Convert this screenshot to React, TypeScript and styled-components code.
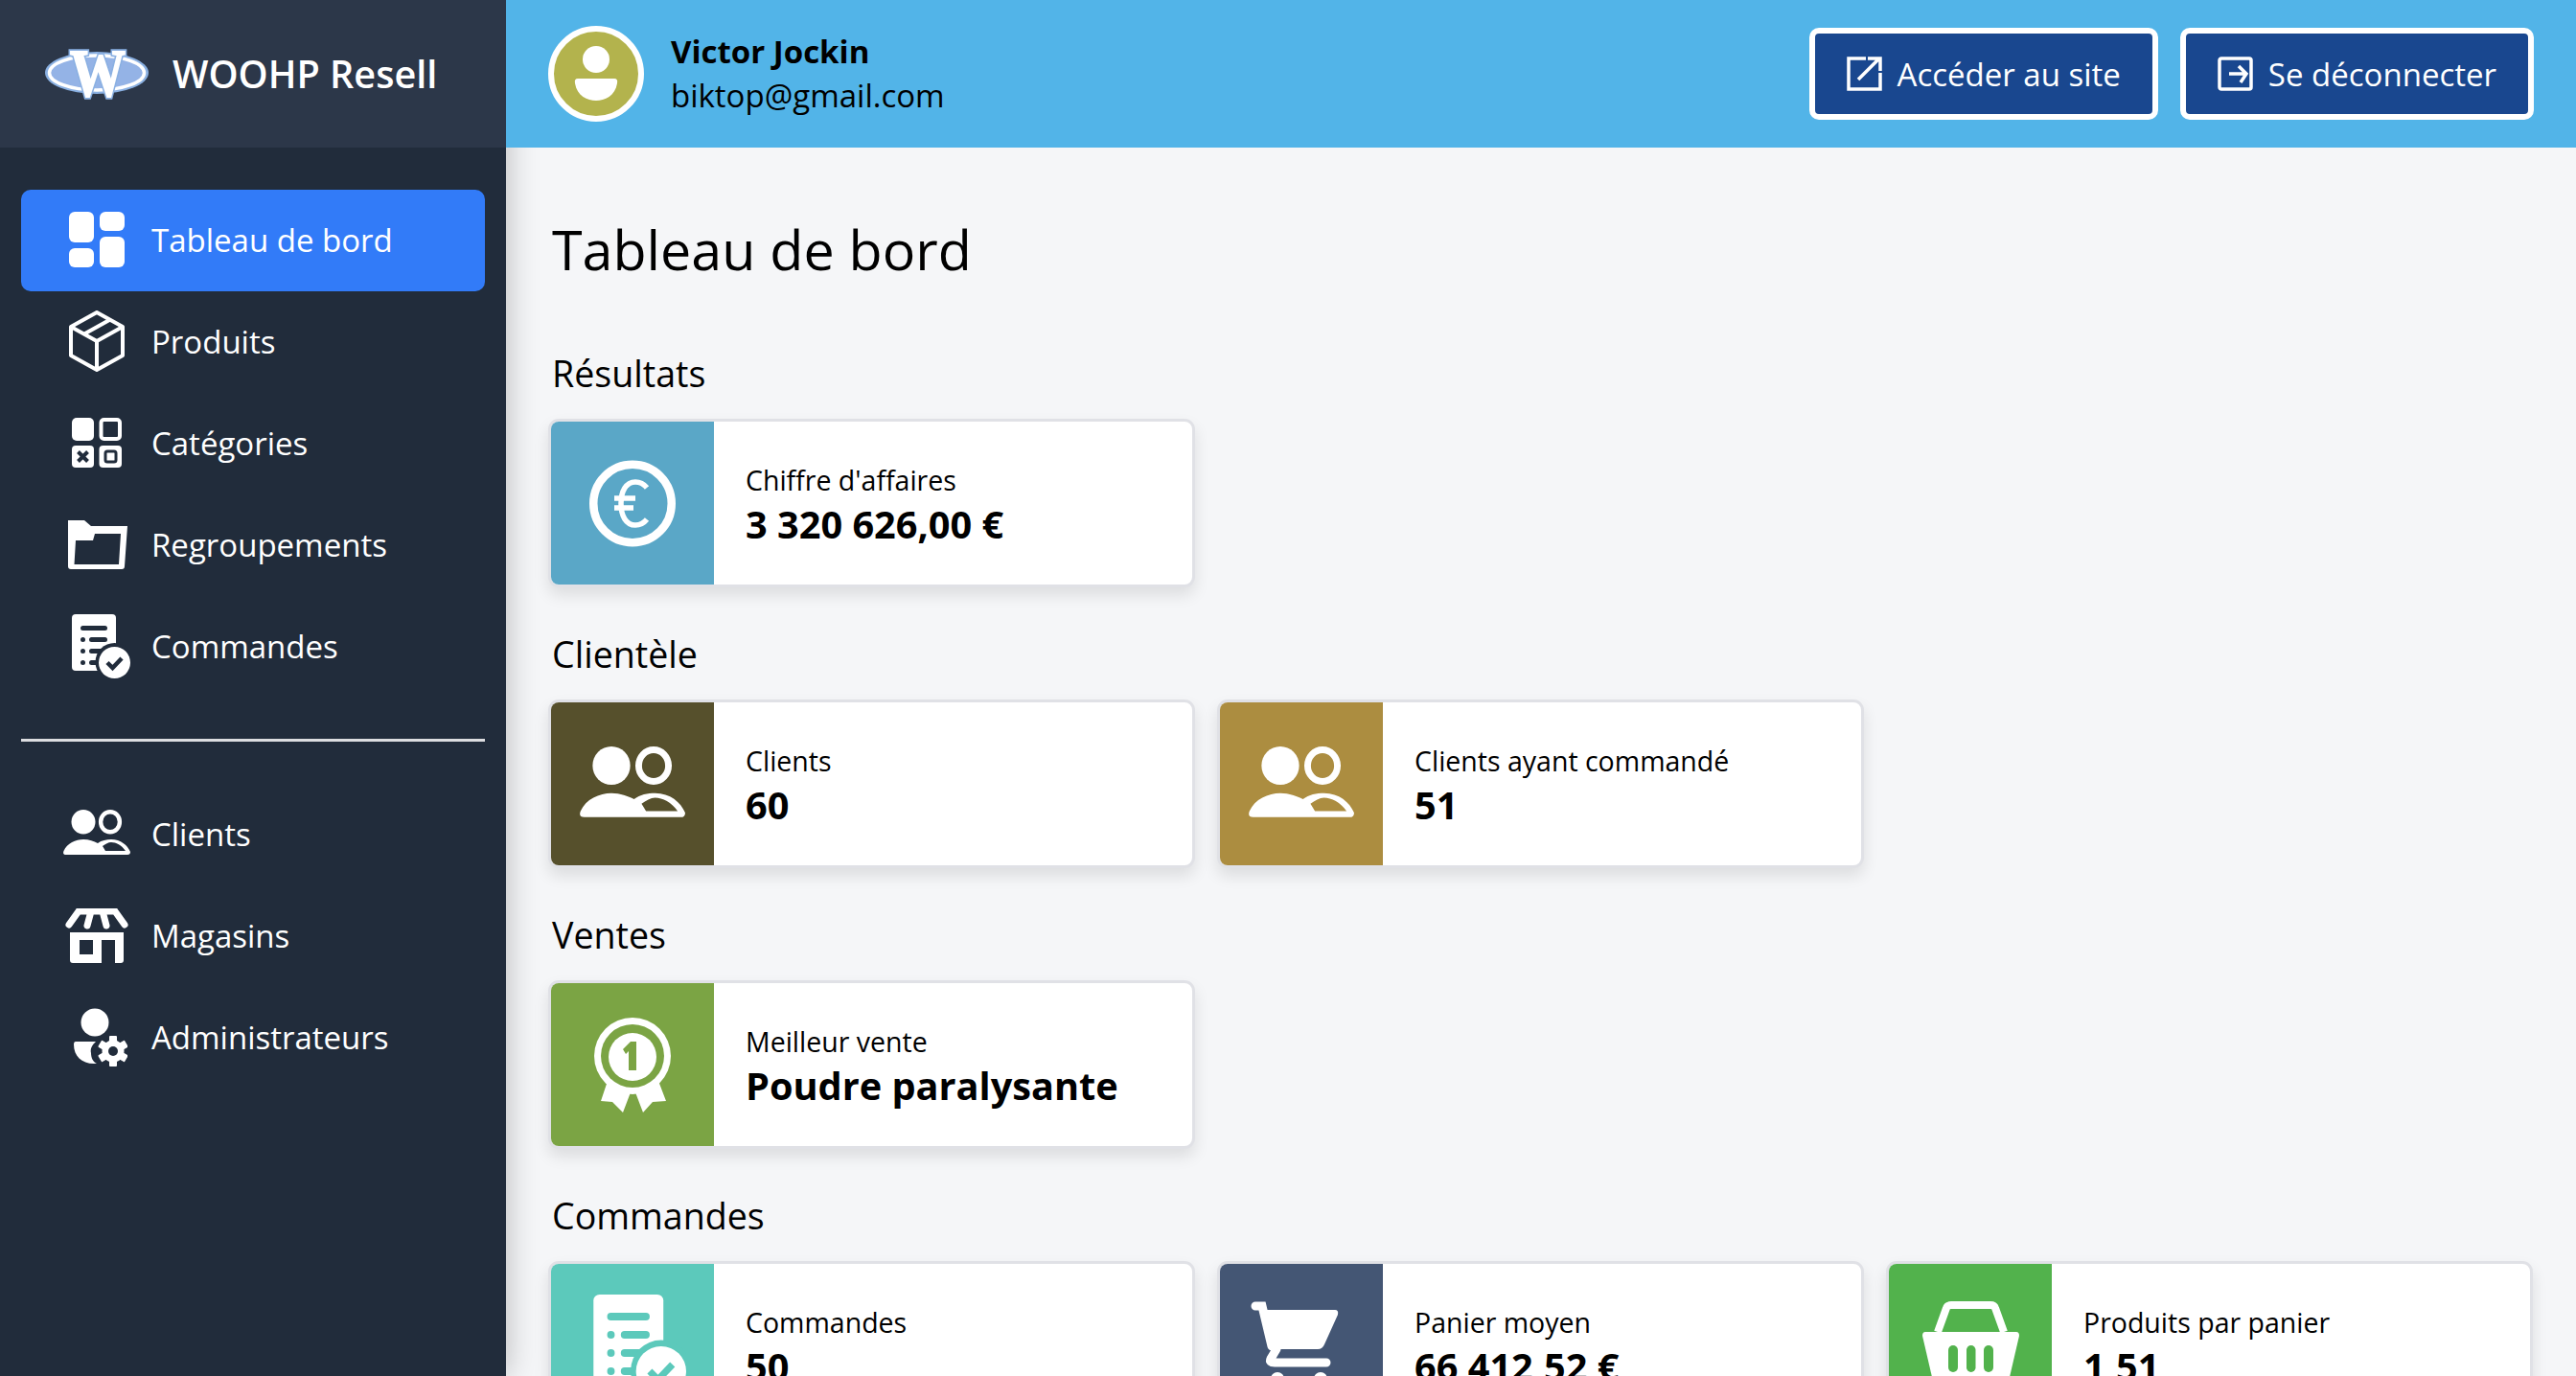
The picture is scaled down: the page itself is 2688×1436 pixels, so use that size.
import React from 'react'
import styled, { createGlobalStyle } from 'styled-components'

const GlobalStyle = createGlobalStyle`
  html, body {
    margin: 0;
    padding: 0;
    background: #f5f6f8;
    font-family: 'Open Sans', 'Liberation Sans', sans-serif;
  }
`

const Page = styled.div`
  display: flex;
  height: 100vh;
  overflow: hidden;
`

const Sidebar = styled.aside`
  width: 528px;
  flex: none;
  background: #212c3b;
  color: #fff;
  position: relative;
  z-index: 1;
  box-shadow: 0 0 32px rgba(0, 0, 0, 0.25);
`

const Brand = styled.div`
  height: 154px;
  display: flex;
  align-items: center;
  gap: 24px;
  padding-left: 46px;
  background: #2c3749;
`

const BrandName = styled.span`
  font-size: 39.6px;
  font-weight: 600;
`

const Nav = styled.nav`
  display: flex;
  flex-direction: column;
  padding: 44px 22px 0;
`

const NavItem = styled.a<{ $active?: boolean }>`
  height: 106px;
  box-sizing: border-box;
  display: flex;
  align-items: center;
  gap: 20px;
  padding: 0 0 2px 42px;
  border-radius: 10px;
  font-size: 33px;
  background: ${({ $active }) => ($active ? '#327bf8' : 'transparent')};
`

const NavIcon = styled.span`
  width: 74px;
  display: flex;
  justify-content: center;
`

const Divider = styled.hr`
  height: 3px;
  margin: 43px 0 44px;
  border: 0;
  background: #dcdde0;
`

const Main = styled.div`
  flex: 1;
  min-width: 0;
`

const Header = styled.header`
  height: 154px;
  display: flex;
  align-items: center;
  justify-content: space-between;
  padding: 0 44px 0 44px;
  background: #52b4e8;
  position: relative;
  z-index: 2;
`

const User = styled.div`
  display: flex;
  align-items: center;
  gap: 28px;
`

const Avatar = styled.div`
  width: 100px;
  height: 100px;
  box-sizing: border-box;
  display: flex;
  align-items: center;
  justify-content: center;
  border: 6px solid #fff;
  border-radius: 50%;
  background: #b3b34d;
`

const UserText = styled.div`
  display: flex;
  flex-direction: column;
  font-size: 33px;
  line-height: 46px;
  color: #000;
`

const UserName = styled.strong`
  font-weight: 700;
`

const Actions = styled.div`
  display: flex;
  gap: 23px;
`

const HeaderButton = styled.a`
  height: 96px;
  box-sizing: border-box;
  display: flex;
  align-items: center;
  gap: 16px;
  padding: 0 33px;
  border: 6px solid #fff;
  border-radius: 10px;
  background: #19478f;
  color: #fff;
  font-size: 33px;
`

const Content = styled.main`
  padding: 66px 43px 0 44px;
`

const Title = styled.h1`
  margin: 0 0 65px 4px;
  font-size: 57.4px;
  font-weight: 400;
  line-height: 80px;
  color: #000;
`

const Section = styled.section`
  margin-bottom: 45px;
`

const SectionTitle = styled.h2`
  margin: 0 0 22px 4px;
  font-size: 37.6px;
  font-weight: 400;
  line-height: 50px;
  color: #000;
`

const CardGrid = styled.div`
  display: grid;
  grid-template-columns: repeat(3, 675px);
  gap: 23px;
`

const Card = styled.div`
  height: 176px;
  box-sizing: border-box;
  display: flex;
  border: 3px solid #e0e1e6;
  border-radius: 11px;
  background: #fff;
  overflow: hidden;
  box-shadow: 0 8px 16px rgba(0, 0, 0, 0.1);
`

const CardIcon = styled.div<{ $color: string }>`
  width: 170px;
  flex: none;
  display: flex;
  align-items: center;
  justify-content: center;
  background: ${({ $color }) => $color};
`

const CardBody = styled.div`
  display: flex;
  flex-direction: column;
  justify-content: center;
  padding: 1px 0 0 33px;
  color: #000;
`

const CardLabel = styled.span`
  font-size: 28.5px;
  line-height: 42px;
`

const CardValue = styled.strong`
  font-size: 39.7px;
  font-weight: 700;
  line-height: 50px;
`

const LogoIcon = () => (
  <svg width="110" height="50" viewBox="0 0 110 50" overflow="visible" fontFamily="'Liberation Serif', serif" fontWeight="700" fontSize="70">
    <ellipse cx="55" cy="24" rx="54" ry="22" fill="#8ab0e2" />
    <ellipse cx="55" cy="24" rx="49.5" ry="18" fill="#94b3e6" stroke="#fff" strokeWidth="3.5" />
    <text x="56" y="47.5" textAnchor="middle" textLength="58" lengthAdjust="spacingAndGlyphs" fill="#8ab0e2" stroke="#8ab0e2" strokeWidth="5.5" aria-hidden="true">
      W
    </text>
    <text x="56" y="47.5" textAnchor="middle" textLength="58" lengthAdjust="spacingAndGlyphs" fill="#fff" stroke="#fff" strokeWidth="1.8">
      W
    </text>
  </svg>
)

const DashboardIcon = () => (
  <svg width="58" height="58" viewBox="0 0 58 58" fill="#fff">
    <rect width="26" height="32" rx="6" />
    <rect x="32" width="26" height="20" rx="6" />
    <rect y="38" width="26" height="20" rx="6" />
    <rect x="32" y="26" width="26" height="32" rx="6" />
  </svg>
)

const BoxIcon = () => (
  <svg width="58" height="64" viewBox="0 0 58 64" fill="none" stroke="#fff" strokeWidth="4" strokeLinejoin="round">
    <path d="M29 2 56 17V47L29 62 2 47V17Z" />
    <path d="M2 17 29 32 56 17M29 32V62M16 24.5 43 9.5" />
  </svg>
)

const CategoriesIcon = () => (
  <svg width="52" height="52" viewBox="0 0 52 52">
    <rect width="23" height="24" rx="5" fill="#fff" />
    <rect x="30.5" y="2" width="19.5" height="20" rx="3" fill="none" stroke="#fff" strokeWidth="4" />
    <rect y="29" width="23" height="23" rx="4" fill="#fff" />
    <path d="M6.5 35.5 16.5 45.5M16.5 35.5 6.5 45.5" stroke="#212c3b" strokeWidth="4" />
    <rect x="28.5" y="29" width="23.5" height="23" rx="4" fill="#fff" />
    <rect x="35" y="35" width="11" height="11" rx="2" fill="none" stroke="#212c3b" strokeWidth="3" />
  </svg>
)

const FolderIcon = () => (
  <svg width="64" height="52" viewBox="-2 0 64 52" fill="#fff">
    <path
      fillRule="evenodd"
      d="M0 1H17L24 7H62L59 49Q59 52 56 52H3Q0 52 0 49ZM8 22H26L28 15H55L53 47H6.5Z"
    />
  </svg>
)

const OrderIcon = ({ cut, size = 70 }: { cut: string; size?: number }) => (
  <svg width={size} height={(size * 67) / 70} viewBox="-9 0 70 67" fill="#fff">
    <rect width="46" height="59" rx="4" />
    <g fill={cut}>
      <rect x="9" y="12" width="28" height="5" rx="2.5" />
      <rect x="18" y="24" width="19" height="5" rx="2.5" />
      <rect x="18" y="36" width="19" height="5" rx="2.5" />
      <rect x="18" y="48" width="12" height="5" rx="2.5" />
      <circle cx="11.5" cy="26.5" r="2.5" />
      <circle cx="11.5" cy="38.5" r="2.5" />
      <circle cx="11.5" cy="50.5" r="2.5" />
      <circle cx="44.5" cy="50" r="20" />
    </g>
    <circle cx="44.5" cy="50.5" r="16.5" />
    <path d="M37 50.5 42.5 56 52 46" fill="none" stroke={cut} strokeWidth="4.5" />
  </svg>
)

const UsersIcon = ({ size = 70 }: { size?: number }) => (
  <svg width={size} height={(size * 50) / 70} viewBox="0 0 70 50" fill="#fff">
    <ellipse cx="21" cy="12.75" rx="12.5" ry="12.75" />
    <ellipse cx="49" cy="12.75" rx="9.9" ry="10.5" fill="none" stroke="#fff" strokeWidth="4.4" />
    <path
      fillRule="evenodd"
      d="M3 47Q-1 47 .5 43C4 35 13 31 21 31 27 31 32 33 36 35 40 32 45 31 50 31 60 31 67 37 70 44 70 46 69 47 67 47ZM41 38 44 43H65C61 37 55 34 50 34 47 34 44 36 41 38Z"
    />
  </svg>
)

const StoreIcon = () => (
  <svg width="66" height="57" viewBox="0 0 66 57" fill="#fff">
    <path d="M14 3H52M14 3 4 17M27 3 23 18M39 3 43 18M52 3 62 17" fill="none" stroke="#fff" strokeWidth="7" strokeLinecap="round" />
    <path
      fillRule="evenodd"
      d="M5 25H61V54Q61 57 58 57H52V33H38V57H8Q5 57 5 54ZM15 33V48H29V33Z"
    />
  </svg>
)

const AdminIcon = () => (
  <svg width="64" height="61" viewBox="-8 0 64 61" fill="#fff">
    <circle cx="22" cy="15" r="14.5" />
    <path d="M2 35H23C19 39 17 42 18 47 18 52 20 56 24 58H21C8 58 0 50 0 38Q0 35 2 35Z" />
    <g transform="translate(41 45)">
      <circle r="11.5" />
      {[0, 60, 120, 180, 240, 300].map((deg) => (
        <rect key={deg} x="-4" y="-16" width="8" height="7" rx="1" transform={`rotate(${deg})`} />
      ))}
      <circle r="5" fill="#212c3b" />
    </g>
  </svg>
)

const ExternalIcon = () => (
  <svg width="37" height="36" viewBox="0 0 37 36" fill="none" stroke="#fff" strokeWidth="3.5">
    <path d="M20 2H2V34H35V17" />
    <path d="M12 24 33 3M22 2H35V15" />
  </svg>
)

const LogoutIcon = () => (
  <svg width="37" height="36" viewBox="0 0 37 36" fill="none" stroke="#fff" strokeWidth="3.5">
    <rect x="2" y="2" width="33" height="32" rx="2" />
    <path d="M12 18H30M22 10 30 18 24 27" />
  </svg>
)

const PersonIcon = () => (
  <svg width="46" height="58" viewBox="0 0 46 58" fill="#fff">
    <circle cx="23" cy="14" r="14" />
    <path d="M4 34H42Q46 34 45 39C43 52 32 57 23 57 14 57 3 52 1 39Q0 34 4 34Z" />
  </svg>
)

const EuroIcon = () => (
  <svg width="90" height="91" viewBox="0 0 90 91" fill="none" stroke="#fff">
    <circle cx="45" cy="45.5" r="40.75" strokeWidth="8.5" />
    <path
      strokeWidth="5.5"
      d="M60 29C56 24 52 23 48 23 38 23 33 33 33 45.5 33 58 38 68 48 68 52 68 56 67 60 62M26 40H48M26 50H46"
    />
  </svg>
)

const BadgeIcon = () => (
  <svg width="80" height="99" viewBox="0 0 80 99">
    <path d="M14 66 7 87 19 88 30 99 38 78H43L51 99 61 88 75 87 67 66Z" fill="#fff" />
    <circle cx="40" cy="40" r="40" fill="#fff" />
    <circle cx="40" cy="40" r="33" fill="#7ba444" />
    <circle cx="40" cy="41" r="25" fill="#fff" />
    <path d="M30 33 38 25H44V55H36V35L33 38Z" fill="#7ba444" />
  </svg>
)

const CartIcon = () => (
  <svg width="106" height="92" viewBox="0 0 106 92" fill="#fff">
    <path d="M5 5H12L22 47" fill="none" stroke="#fff" strokeWidth="9" strokeLinecap="round" />
    <path d="M14 9H88Q92 9 91 14L77 45Q75 50 70 50H24Z" />
    <path d="M27 50 21 60Q19 64 25 64H79" fill="none" stroke="#fff" strokeWidth="9" strokeLinecap="round" />
    <circle cx="28" cy="81" r="7" />
    <circle cx="73" cy="81" r="7" />
  </svg>
)

const BasketIcon = () => (
  <svg width="101" height="92" viewBox="0 0 101 92" fill="#fff">
    <path d="M16 32 25 7Q26 4 30 4H71Q75 4 76 7L85 32" fill="none" stroke="#fff" strokeWidth="8" />
    <path d="M3 32H98Q101 32 101 36L88 92H13L0 36Q0 32 3 32Z" />
    <g fill="#52b24c">
      <rect x="27" y="46" width="10" height="28" rx="5" />
      <rect x="46" y="46" width="9.5" height="28" rx="4.75" />
      <rect x="64" y="46" width="10" height="28" rx="5" />
    </g>
  </svg>
)

const topLinks = [
  { label: 'Tableau de bord', icon: <DashboardIcon />, active: true },
  { label: 'Produits', icon: <BoxIcon /> },
  { label: 'Catégories', icon: <CategoriesIcon /> },
  { label: 'Regroupements', icon: <FolderIcon /> },
  { label: 'Commandes', icon: <OrderIcon cut="#212c3b" /> },
]

const bottomLinks = [
  { label: 'Clients', icon: <UsersIcon /> },
  { label: 'Magasins', icon: <StoreIcon /> },
  { label: 'Administrateurs', icon: <AdminIcon /> },
]

const sections = [
  {
    title: 'Résultats',
    cards: [{ label: "Chiffre d'affaires", value: '3 320 626,00 €', color: '#5aa7c7', icon: <EuroIcon /> }],
  },
  {
    title: 'Clientèle',
    cards: [
      { label: 'Clients', value: '60', color: '#56502c', icon: <UsersIcon size={110} /> },
      { label: 'Clients ayant commandé', value: '51', color: '#ac8d40', icon: <UsersIcon size={110} /> },
    ],
  },
  {
    title: 'Ventes',
    cards: [{ label: 'Meilleur vente', value: 'Poudre paralysante', color: '#7ba444', icon: <BadgeIcon /> }],
  },
  {
    title: 'Commandes',
    cards: [
      { label: 'Commandes', value: '50', color: '#5cc9bb', icon: <OrderIcon cut="#5cc9bb" size={111} /> },
      { label: 'Panier moyen', value: '66 412,52 €', color: '#445674', icon: <CartIcon /> },
      { label: 'Produits par panier', value: '1,51', color: '#52b24c', icon: <BasketIcon /> },
    ],
  },
]

const App = () => (
  <Page>
    <GlobalStyle />
    <Sidebar>
      <Brand>
        <LogoIcon />
        <BrandName>WOOHP Resell</BrandName>
      </Brand>
      <Nav>
        {topLinks.map((link) => (
          <NavItem key={link.label} $active={link.active}>
            <NavIcon>{link.icon}</NavIcon>
            {link.label}
          </NavItem>
        ))}
        <Divider />
        {bottomLinks.map((link) => (
          <NavItem key={link.label}>
            <NavIcon>{link.icon}</NavIcon>
            {link.label}
          </NavItem>
        ))}
      </Nav>
    </Sidebar>
    <Main>
      <Header>
        <User>
          <Avatar>
            <PersonIcon />
          </Avatar>
          <UserText>
            <UserName>Victor Jockin</UserName>
            biktop@gmail.com
          </UserText>
        </User>
        <Actions>
          <HeaderButton>
            <ExternalIcon />
            Accéder au site
          </HeaderButton>
          <HeaderButton>
            <LogoutIcon />
            Se déconnecter
          </HeaderButton>
        </Actions>
      </Header>
      <Content>
        <Title>Tableau de bord</Title>
        {sections.map((section) => (
          <Section key={section.title}>
            <SectionTitle>{section.title}</SectionTitle>
            <CardGrid>
              {section.cards.map((card) => (
                <Card key={card.label}>
                  <CardIcon $color={card.color}>{card.icon}</CardIcon>
                  <CardBody>
                    <CardLabel>{card.label}</CardLabel>
                    <CardValue>{card.value}</CardValue>
                  </CardBody>
                </Card>
              ))}
            </CardGrid>
          </Section>
        ))}
      </Content>
    </Main>
  </Page>
)

export default App
